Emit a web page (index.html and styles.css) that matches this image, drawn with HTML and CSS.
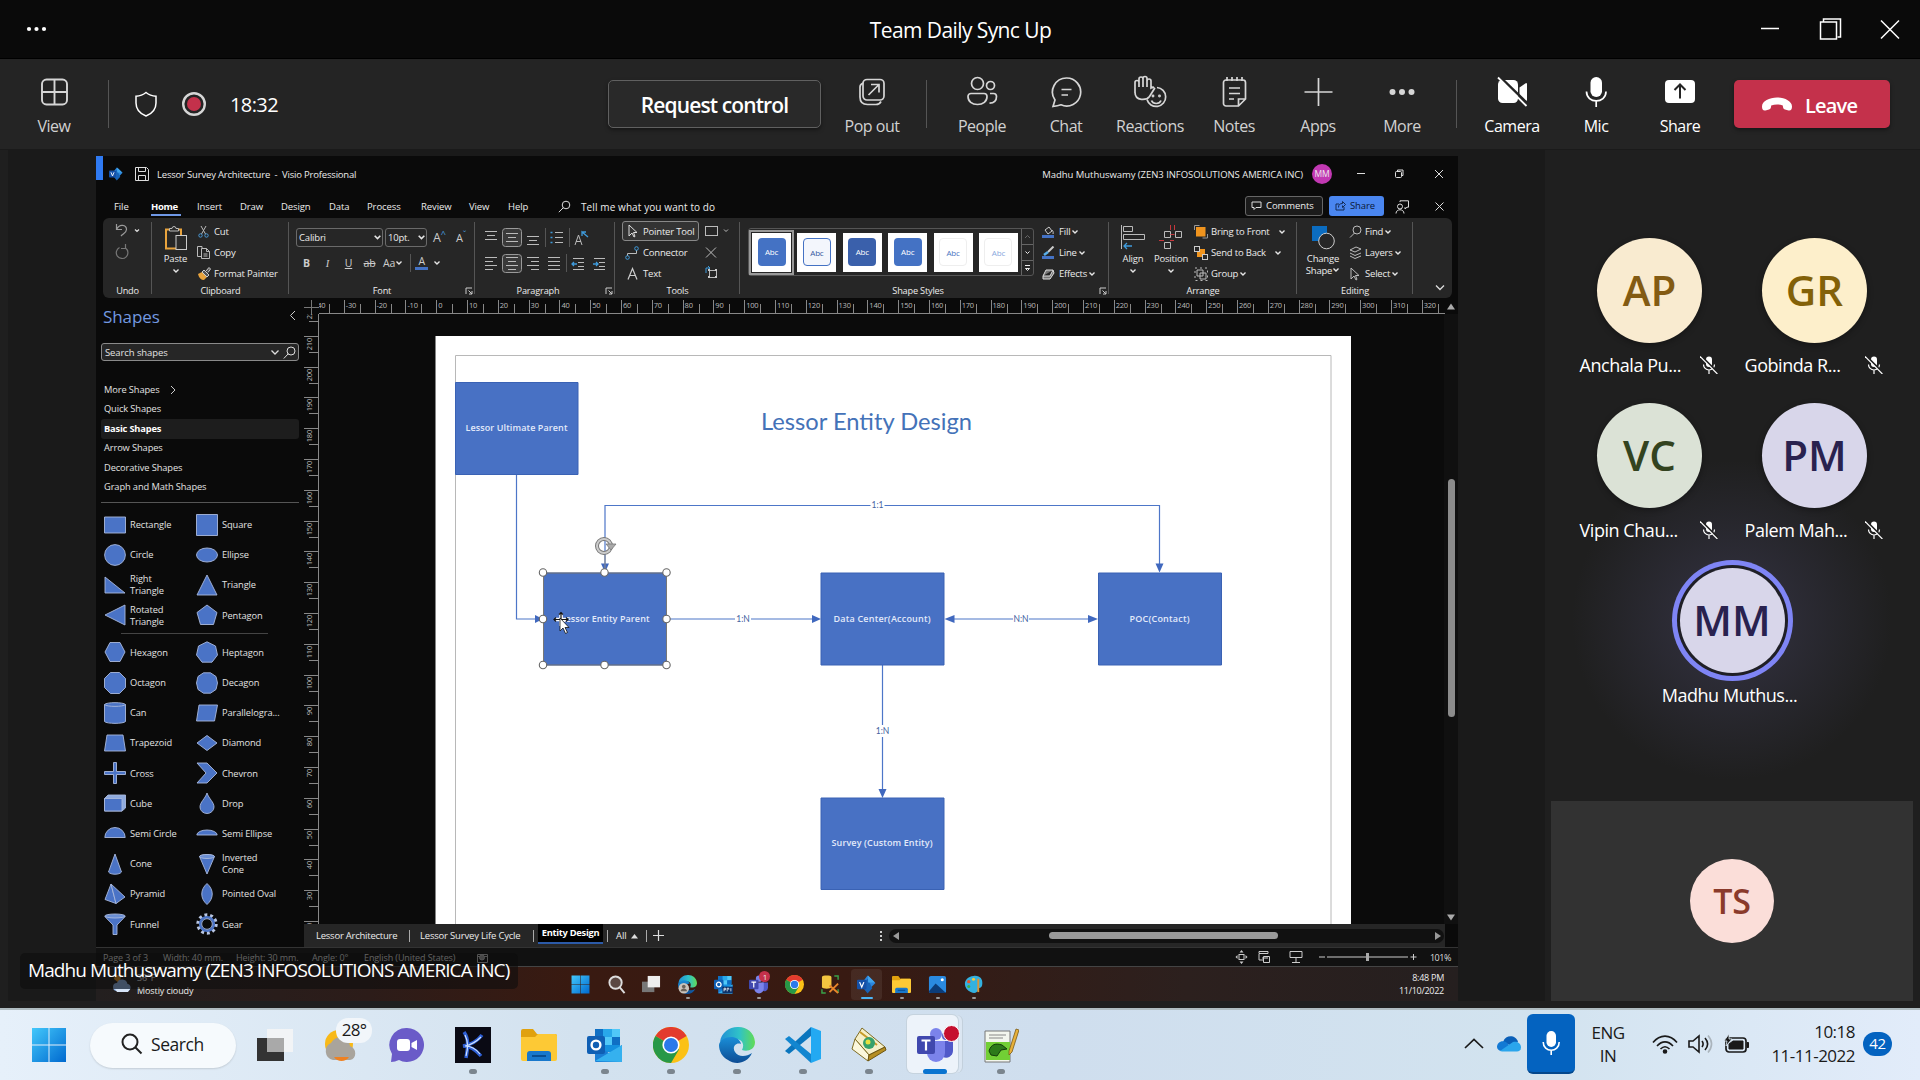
FILE: index.html
```html
<!DOCTYPE html>
<html lang="en">
<head>
<meta charset="utf-8">
<title>Team Daily Sync Up</title>
<link rel="stylesheet" href="styles.css">
</head>
<body>
<svg class="defs" width="0" height="0">
  <defs>
    <symbol id="chev" viewBox="0 0 8 8"><path d="M1.500 2.500 4 5l2.500-2.500" fill="none" stroke="#e6e6e6" stroke-width="1.400"/></symbol>
    <symbol id="mute" viewBox="0 0 18 18"><rect x="6" y="0.5" width="6" height="10.5" rx="3" fill="#fff"/><path d="M3.500 8.500a5.500 5.500 0 0 0 11 0M9 14v4" fill="none" stroke="#fff" stroke-width="1.200"/><path d="M1.200 0 18 17" stroke="#202020" stroke-width="2"/><path d="M0 0.500 17.400 18" stroke="#fff" stroke-width="1.200"/></symbol>
    <symbol id="corner" viewBox="0 0 8 8"><path d="M1 7V1h6M3.500 3.500 7 7M7 4v3H4" fill="none" stroke="#ccc" stroke-width="1"/></symbol>
    <symbol id="chrome" viewBox="0 0 36 36"><circle cx="18" cy="18" r="18" fill="#fbc116"/><path d="M18 18 2.400 9A18 18 0 0 1 33.600 9z" fill="#e33b2e"/><path d="M2.400 9A18 18 0 0 0 18 36l8-13.500-8-4.500z" fill="#279847"/><circle cx="18" cy="18" r="8.600" fill="#fff"/><circle cx="18" cy="18" r="7" fill="#2a79ea"/></symbol>
    <linearGradient id="ed1" x1="0" y1="0" x2="1" y2="0"><stop offset="0" stop-color="#2190d6"/><stop offset=".55" stop-color="#2fc2c8"/><stop offset="1" stop-color="#62dc55"/></linearGradient>
    <linearGradient id="ed2" x1="0" y1="0" x2="0" y2="1"><stop offset="0" stop-color="#1a8fd8"/><stop offset="1" stop-color="#0d4c94"/></linearGradient>
    <symbol id="edge" viewBox="0 0 36 36"><path d="M1 15C3-4 34-6 36 15c0 8-8 10-13 8 3-6 0-11-7-11C9 12 3 14 1 15z" fill="url(#ed1)"/><path d="M0 18c1-9 20-12 22-1-6-2-9 4-6 8 3 5 11 5 17 1C28 37 16 38 9 33 3 30 0 24 0 18z" fill="url(#ed2)"/></symbol>
    <linearGradient id="wn" x1="0" y1="0" x2="1" y2="1"><stop offset="0" stop-color="#43c8fb"/><stop offset="1" stop-color="#0069cf"/></linearGradient>
    <symbol id="win" viewBox="0 0 36 36"><path d="M1 1h16.500v16.500H1zM18.500 1H35v16.500H18.500zM1 18.500h16.500V35H1zM18.500 18.500H35V35H18.500z" fill="url(#wn)"/></symbol>
    <symbol id="folder" viewBox="0 0 36 36"><path d="M0 4a2 2 0 0 1 2-2h10l4 5h18a2 2 0 0 1 2 2v8H0z" fill="#e0a10e"/><path d="M0 10h14l3-3h17a2 2 0 0 1 2 2v23a2 2 0 0 1-2 2H2a2 2 0 0 1-2-2z" fill="#fdc935"/><path d="M6 34V27a3 3 0 0 1 3-3h18a3 3 0 0 1 3 3v7z" fill="#1878cc"/><path d="M11 29h14" stroke="#084e92" stroke-width="2"/></symbol>
    <symbol id="teams" viewBox="0 0 36 36"><circle cx="29" cy="9" r="4" fill="#5b60c8"/><path d="M24 14h12v10a7 7 0 0 1-10 6z" fill="#5059c9"/><circle cx="19" cy="7" r="6" fill="#7b83eb"/><path d="M10 14h18v12a9 9 0 0 1-18 0z" fill="#7b83eb"/><rect x="0" y="9" width="18" height="18" rx="2" fill="#4048ae"/><path d="M4.500 13.500h9M9 13.500v10" stroke="#fff" stroke-width="2.200"/></symbol>
    <symbol id="outlook" viewBox="0 0 36 36"><path d="M8 2h24a1 1 0 0 1 1 1v22H8z" fill="#1490df"/><path d="M16 2h9v8h-9z" fill="#28a8ea"/><path d="M25 2h8v8h-8zM16 10h9v8h-9z" fill="#50c8f8"/><path d="M25 18h8v-8h-8zM8 10h8V2H8z" fill="#0f6fc4"/><path d="M8 17l14 9 13-8v16a1 1 0 0 1-1 1H9a1 1 0 0 1-1-1z" fill="#1a7dd4"/><path d="M8 34 35 18v16a1 1 0 0 1-1 1z" fill="#35b1ef"/><rect x="0" y="9" width="18" height="18" rx="2" fill="#0f5fb4"/><circle cx="9" cy="18" r="4.400" fill="none" stroke="#fff" stroke-width="2.400"/></symbol>
    <symbol id="visio" viewBox="0 0 36 36"><path d="M20 1 35 15 20 30 8 17z" fill="#2b86dd"/><path d="M20 7 8 20l12 15 9-10z" fill="#1763b8"/><path d="M21 1v13h13z" fill="#41a5ee"/><rect x="0" y="9" width="18" height="18" rx="2" fill="#1450a8"/><path d="M5 13.500 9 23l4-9.500" stroke="#fff" stroke-width="2.300" fill="none"/></symbol>
  </defs>
</svg>

<header class="titlebar">
  <svg class="dots" width="22" height="8"><g fill="#fff"><circle cx="3" cy="4" r="2.100"/><circle cx="10.500" cy="4" r="2.100"/><circle cx="18" cy="4" r="2.100"/></g></svg>
  <h1>Team Daily Sync Up</h1>
  <svg class="winctl" width="146" height="28" fill="none" stroke="#fff" stroke-width="1.500"><path d="M7 13.500h18M127 5.500l18 18M145 5.500l-18 18"/><path d="M69.500 7V4h17v18h-3"/><rect x="66.500" y="7" width="16" height="17"/></svg>
</header>

<nav class="toolbar">
  <div class="tool"><svg width="32" height="32" fill="none" stroke="#d6d6d6" stroke-width="1.900"><rect x="4" y="4.500" width="25" height="25" rx="4.500"/><path d="M16.500 4.500v25M4 17h25"/></svg><span>View</span></div>
  <i class="sep"></i>
  <svg class="shield" width="24" height="26" fill="none" stroke="#fff" stroke-width="1.500"><path d="M12 1.500c3 2.500 6 3.500 10 3.700V12c0 6-3.500 10.500-10 13C5.500 22.500 2 18 2 12V5.200C6 5 9 4 12 1.500z"/></svg>
  <svg class="rec" width="26" height="26"><circle cx="13" cy="13" r="10.800" fill="none" stroke="#d6d6d6" stroke-width="2.400"/><circle cx="13" cy="13" r="7" fill="#c4314b"/></svg>
  <span class="clock">18:32</span>
  <button class="request">Request control</button>
  <div class="tool first"><svg width="32" height="32" fill="none" stroke="#d6d6d6" stroke-width="1.700"><rect x="7" y="4.500" width="21" height="20.500" rx="4"/><path d="M7 8c-2 1-3 2-3 4v10c0 5 2.500 7.500 7.500 7.500H20c2.500 0 4-1 5-3M12.500 20 22.500 10M15 9.500h8v8"/></svg><span>Pop out</span></div>
  <i class="sep"></i>
  <div class="tool"><svg width="32" height="32" fill="none" stroke="#d6d6d6" stroke-width="1.700"><circle cx="11.500" cy="8.500" r="6"/><circle cx="24.500" cy="10.500" r="4"/><path d="M5 18.500h13a3 3 0 0 1 3 3c0 5-4 8-9.500 8S2 26.500 2 21.500a3 3 0 0 1 3-3zM24 18.500h3.500a3 3 0 0 1 3 3c0 4-2.500 6.500-7 6.700"/></svg><span>People</span></div>
  <div class="tool"><svg width="32" height="32" fill="none" stroke="#d6d6d6" stroke-width="1.700"><path d="M16.500 3a14 14 0 1 1-5.500 26.800c-2.500.8-5 1.300-8 1.700l2-6.500A14 14 0 0 1 16.500 3zM11.500 14.500h10M11.500 20h6.500"/></svg><span>Chat</span></div>
  <div class="tool"><svg width="34" height="34" fill="none" stroke="#d6d6d6" stroke-width="1.700"><path d="M2 18V7.500a2 2 0 0 1 4 0V12M6 12V4a2 2 0 0 1 4 0v8M10 12V3.500a2 2 0 0 1 4 0V12M14 6a2 2 0 0 1 4 0v7l2-1 1.500 1.500-5 8C14 25 2 27 2 17"/><path d="M24 12.500a9.500 9.500 0 1 1-10 12"/><path d="M18.500 25.500c1.500 4 8 4 9.500 0"/><circle cx="20" cy="21" r=".6"/><circle cx="26.500" cy="21" r=".6"/></svg><span>Reactions</span></div>
  <div class="tool"><svg width="32" height="32" fill="none" stroke="#d6d6d6" stroke-width="1.700"><path d="M8 5h17a2.500 2.500 0 0 1 2.500 2.500V24l-7 7H8a2.500 2.500 0 0 1-2.500-2.500v-21A2.500 2.500 0 0 1 8 5zM20.500 31v-7h7M9 2v4M14 2v4M19 2v4M24 2v4M11 13h11M11 18.500h11M11 24h5"/></svg><span>Notes</span></div>
  <div class="tool"><svg width="32" height="32" stroke="#d6d6d6" stroke-width="1.700"><path d="M16.500 3v28M2.500 17h28"/></svg><span>Apps</span></div>
  <div class="tool"><svg width="32" height="32" fill="#d6d6d6"><circle cx="6.500" cy="17" r="3"/><circle cx="16" cy="17" r="3"/><circle cx="25.500" cy="17" r="3"/></svg><span>More</span></div>
  <i class="sep s3"></i>
  <div class="tool on"><svg width="32" height="32"><rect x="2" y="5" width="20" height="23" rx="4.500" fill="#fff"/><path d="M23.500 12.500 30 8a1 1 0 0 1 1 1v16a1 1 0 0 1-1 1l-6.500-5z" fill="#fff"/><path d="M3.500 1.500 32 29" stroke="#242424" stroke-width="2.500"/><path d="M2 2.500 30.500 31" stroke="#fff" stroke-width="1.800"/></svg><span>Camera</span></div>
  <div class="tool on"><svg width="32" height="32"><rect x="10.500" y="2" width="11.500" height="20" rx="5.700" fill="#fff"/><path d="M6.500 16.500c0 12.500 19.500 12.500 19.500 0M16.200 26v6" fill="none" stroke="#fff" stroke-width="1.700"/></svg><span>Mic</span></div>
  <div class="tool on"><svg width="32" height="32"><rect x="1" y="5" width="30" height="23" rx="4" fill="#fff"/><path d="M16 23.500V10M10.500 15l5.500-5.500 5.500 5.500" fill="none" stroke="#242424" stroke-width="2"/></svg><span>Share</span></div>
  <button class="leave"><svg width="30" height="14"><path d="M15 .5c7.500 0 15 3.500 15 9 0 3-1.200 4.500-3.500 4l-3.500-1c-1.700-.5-2-1.500-2.200-4-3.500-1.500-8-1.500-11.600 0-.2 2.500-.5 3.500-2.200 4l-3.500 1C1.200 14 0 12.500 0 9.500 0 4 7.500.5 15 .5z" fill="#fff"/></svg>Leave</button>
</nav>

<main class="stage">
  <section class="share">
    <div class="visio">
      <div class="vtitle">
        <i class="marker"></i>
        <svg class="vlogo" width="14" height="14"><use href="#visio"/></svg>
        <svg class="save" width="14" height="14" fill="none" stroke="#ddd"><path d="M1 .5h10.500l2 2v11H.5V.5zM3.500.5v4h7v-4M3.500 13.500v-5h7v5"/></svg>
        <span class="doc">Lessor Survey Architecture&nbsp; -&nbsp; Visio Professional</span>
        <span class="user">Madhu Muthuswamy (ZEN3 INFOSOLUTIONS AMERICA INC)</span>
        <b class="ava">MM</b>
        <svg class="vctl" width="90" height="12" fill="none" stroke="#ddd"><path d="M1 5.500h8M79 2l8 8M87 2l-8 8M41.500 3.500V2h5.500v5.500h-1.500"/><rect x="39.500" y="3.500" width="6" height="6" rx="1"/></svg>
      </div>
      <div class="menus">
        <span class="m1">File</span><span class="m2 cur">Home</span><span class="m3">Insert</span><span class="m4">Draw</span><span class="m5">Design</span><span class="m6">Data</span><span class="m7">Process</span><span class="m8">Review</span><span class="m9">View</span><span class="m10">Help</span>
        <svg width="13" height="13" fill="none" stroke="#ddd"><circle cx="8" cy="5" r="3.800"/><path d="M5.300 7.700.8 12.200"/></svg>
        <span class="tell">Tell me what you want to do</span>
        <button class="comments"><svg width="11" height="10" fill="none" stroke="#ddd"><path d="M1 1h9v5.500H5L3 8.500v-2H1z"/></svg>Comments</button>
        <button class="shareb"><svg width="11" height="11" fill="none" stroke="#132a55"><path d="M4 4H1v6h8V7M3.500 7.500c0-3 1.500-4 4-4V1.500l3 3-3 3V5.500"/></svg>Share</button>
        <svg class="fb" width="15" height="14" fill="none" stroke="#ddd"><path d="M5 2V.8h8.500v6.400H12L10 9V7.200M1 13.500c0-5 8-5 8 0"/><circle cx="5" cy="6.500" r="2.500"/></svg>
        <svg class="x2" width="9" height="9" stroke="#ddd"><path d="M.5.5l8 8M8.500.5l-8 8"/></svg>
      </div>

      <div class="ribbon">
        <div class="grp g-undo"><div class="body"><svg width="48" height="63" fill="none" stroke="#9a9a9a" stroke-width="1.200"><path d="M13.500 3v5.500H19M13.500 8.500c3-6.500 10-4.500 10 0 0 3-3 4-5.500 6.500"/><path d="M22.500 27a5.800 5.800 0 1 1-6-.5M22.500 23v4.500H18" stroke="#777"/><path d="m32 8.500 2 2 2-2" stroke="#ddd"/></svg></div><em>Undo</em></div>
        <div class="grp g-clip"><div class="body">
          <div class="big"><svg width="24" height="26" fill="none"><rect x="2" y="4.500" width="15" height="19" stroke="#e8a33d" stroke-width="2"/><path d="M5.500 6V3.500H8a2 2 0 0 1 4 0h2.500V6z" fill="#2a2a2a" stroke="#bbb"/><rect x="12" y="10.500" width="10.500" height="14" fill="#2a2a2a" stroke="#ccc"/></svg><span>Paste</span><svg width="8" height="8"><use href="#chev"/></svg></div>
          <div class="rows">
            <div><svg width="14" height="13" fill="none" stroke="#bbb"><path d="M4 1l4.500 8M9 1 4.500 9"/><circle cx="3.500" cy="10.500" r="1.700" stroke="#4a9ad8"/><circle cx="9.500" cy="10.500" r="1.700" stroke="#4a9ad8"/></svg>Cut</div>
            <div><svg width="14" height="13" fill="none" stroke="#bbb"><path d="M4.500 10.500H.5v-10H5v2M4.500 2.500h5l3 3v7h-8zM9.500 2.500v3h3M6.500 8h4M6.500 10h4"/></svg>Copy</div>
            <div><svg width="14" height="13"><path d="M1 7l4-2 5 5-3 3c-3 0-5-2-6-6z" fill="#e8a33d"/><path d="M5 5l2-2 5 5-2 2zM9 4l3-3.500 1.500 1.500L11 5.500" fill="#555" stroke="#ccc"/></svg>Format Painter</div>
          </div></div><em>Clipboard</em></div>
        <div class="grp g-font"><div class="body two">
          <div class="line"><span class="combo c1">Calibri<svg width="9" height="9"><use href="#chev"/></svg></span><span class="combo c2">10pt.<svg width="9" height="9"><use href="#chev"/></svg></span><span class="aa">A<sup>^</sup></span><span class="aa sm">A<sup>ˇ</sup></span></div>
          <div class="line fmt"><b>B</b><i>I</i><u>U</u><s>ab</s><span>Aa</span><svg width="8" height="8"><use href="#chev"/></svg><i class="vs"></i><span class="acol">A</span><svg width="8" height="8"><use href="#chev"/></svg></div>
        </div><em>Font</em><svg class="dl" width="8" height="8"><use href="#corner"/></svg></div>
        <div class="grp g-para"><div class="body">
          <svg width="139" height="63" fill="none" stroke="#bbb"><rect x="27.500" y="7.500" width="19" height="18" rx="3" fill="#3a3a3a" stroke="#999"/><rect x="27.500" y="33.500" width="19" height="18" rx="3" fill="#3a3a3a" stroke="#999"/><path d="M10 10.500h12M12 14.500h8M10 18.500h12M31 12.500h12M33 16.500h8M31 20.500h12M52 15.500h12M54 19.500h8M52 23.500h12M10 36.500h12M10 40.500h8M10 44.500h12M10 48.500h8M31 36.500h12M33 40.500h8M31 44.500h12M33 48.500h8M52 36.500h12M56 40.500h8M52 44.500h12M56 48.500h8M73 36.500h12M73 40.500h12M73 44.500h12M73 48.500h12M80 11.500h8M80 16.500h8M80 21.500h8M98 37.500h11M103 41.500h6M103 45.500h6M98 48.500h11M119 37.500h11M124 41.500h6M124 45.500h6M119 48.500h11"/><path d="M70.500 7v19M94.500 7v19M91.500 33v18" stroke="#555"/><path d="M75.500 11.500h2M75.500 16.500h2M75.500 21.500h2M102 43h-5m2-2-2 2 2 2M118 43h5m-2-2 2 2-2 2M107 15V11l6 5M107 11h4" stroke="#3f9bdb" stroke-width="1.300"/><path d="M100 24l3.500-10L107 24M101 20.500h5"/></svg>
        </div><em>Paragraph</em><svg class="dl" width="8" height="8"><use href="#corner"/></svg></div>
        <div class="grp g-tools"><div class="body">
          <div class="rows">
            <div class="boxed"><svg width="16" height="14" fill="none" stroke="#ddd"><path d="M5 1v11l3-3 2 4 1-.6L9.500 8.500H13z"/></svg>Pointer Tool</div>
            <div><svg width="16" height="14" fill="none" stroke="#bbb"><path d="M3.500 10V7.500h9V4"/><circle cx="3.500" cy="11.500" r="1.800" stroke="#3f9bdb"/><circle cx="12.500" cy="2.500" r="1.800" stroke="#3f9bdb"/></svg>Connector</div>
            <div><svg width="16" height="14" fill="none" stroke="#ccc" stroke-width="1.200"><path d="M4 12.500 8.500 1.500 13 12.500M5.500 8.500h6"/></svg>Text</div>
          </div>
          <svg class="tb" width="34" height="63" fill="none" stroke="#bbb"><rect x="2.500" y="5.500" width="12" height="9"/><path d="m21 8.500 2 2 2-2M3 26.500l10 10M13 26.500l-10 10M6.500 49.500h7v7h-7z"/><path d="M3 52v-5h4M5 45l2 2-2 2" stroke="#3f9bdb"/><path d="M5 48h2v2H5zM12 48h2v2h-2zM5 55h2v2H5zM12 55h2v2h-2z" fill="#ccc" stroke="none"/></svg>
        </div><em>Tools</em></div>
        <div class="grp g-style"><div class="body">
          <div class="gallery"><span class="t sel"><b class="f1">Abc</b></span><span class="t"><b class="f2">Abc</b></span><span class="t"><b class="f3">Abc</b></span><span class="t"><b class="f1">Abc</b></span><span class="t"><b class="f5">Abc</b></span><span class="t"><b class="f6">Abc</b></span>
            <svg width="12" height="46" fill="none" stroke="#666"><path d="M.5 0v46M0 15.500h12M0 31.500h12M4 9l2.500-2.500L9 9"/><path d="M4.500 22.500l2 2 2-2M4 36.500h5M4.500 39.500l2 2 2-2z" stroke="#eee"/></svg></div>
          <div class="rows">
            <div><svg width="13" height="14"><rect y="10" width="12" height="3" fill="#4472c4"/><path d="M3 5l4-3 3 4-4 3zM10 5c1 1 1.500 2 1 4" fill="none" stroke="#ccc"/></svg>Fill<svg width="8" height="8"><use href="#chev"/></svg></div>
            <div><svg width="13" height="14"><rect y="10" width="12" height="3" fill="#4472c4"/><path d="M11.500.5 6 6" stroke="#ccc" stroke-width="2"/><path d="M6 6 2 9" stroke="#5ab0ea" stroke-width="2.500"/></svg>Line<svg width="8" height="8"><use href="#chev"/></svg></div>
            <div><svg width="13" height="14" fill="#777" stroke="#ddd"><path d="M1 9 4 3h7l-3 6zM1 9v3h7l4-6-1-3"/></svg>Effects<svg width="8" height="8"><use href="#chev"/></svg></div>
          </div></div><em>Shape Styles</em><svg class="dl" width="8" height="8"><use href="#corner"/></svg></div>
        <div class="grp g-arr"><div class="body">
          <div class="big"><svg width="24" height="26" fill="none" stroke="#bbb"><path d="M.5 0v24M2.500 1.500h9v5h-9zM2.500 9.500h21v5h-21z"/><path d="M11 21H3m3-3-3 3 3 3" stroke="#3f9bdb" stroke-width="1.300"/></svg><span>Align</span><svg width="8" height="8"><use href="#chev"/></svg></div>
          <div class="big"><svg width="24" height="26" fill="none" stroke="#bbb"><path d="M5.500 6.500h6v6h-6zM16.500 6.500h6v6h-6zM5.500 17.500h6v6h-6z"/><path d="M11.500 0v5M15.500 0v5M11.500 9.500h4M0 15.500h5M11 15.500h4" stroke="#c7373c"/></svg><span>Position</span><svg width="8" height="8"><use href="#chev"/></svg></div>
          <div class="rows">
            <div><svg width="14" height="14" fill="none" stroke="#999"><path d="M.5 5V.5h5M13.500 9v4h-5"/><rect x="2.500" y="2.500" width="8.500" height="8.500" fill="#f0941e" stroke="#f0941e"/></svg>Bring to Front<svg class="far" width="8" height="8"><use href="#chev"/></svg></div>
            <div><svg width="14" height="14" fill="none" stroke="#ccc"><rect x="3" y="3" width="8" height="8" fill="#f0941e" stroke="none"/><rect x=".5" y=".5" width="5" height="5" fill="#262626"/><rect x="8.500" y="8.500" width="5" height="5" fill="#262626"/></svg>Send to Back<svg class="far" width="8" height="8"><use href="#chev"/></svg></div>
            <div><svg width="14" height="14" fill="none" stroke="#bbb"><path d="M3 3h6v6H3zM6 6h6v6H6z"/><path d="M1 1h12.500v12.500H1z" stroke-dasharray="2 3"/></svg>Group<svg width="8" height="8"><use href="#chev"/></svg></div>
          </div></div><em>Arrange</em></div>
        <div class="grp g-edit"><div class="body">
          <div class="big lift"><svg width="24" height="26"><rect x="1" y="1" width="15" height="15" fill="#0b6cc0"/><circle cx="15.500" cy="16" r="7.800" fill="#262626" stroke="#ccc"/></svg><span>Change<br>Shape<svg width="8" height="8"><use href="#chev"/></svg></span></div>
          <div class="rows">
            <div><svg width="13" height="14" fill="none" stroke="#bbb"><circle cx="8" cy="5" r="4"/><path d="M5.500 8 1 12.500"/></svg>Find<svg width="8" height="8"><use href="#chev"/></svg></div>
            <div><svg width="13" height="14" fill="none" stroke="#bbb"><path d="M1 4l6-3 5 2-6 3zM1 7l5 2.500L12 7M1 10l5 2.500L12 10"/></svg>Layers<svg width="8" height="8"><use href="#chev"/></svg></div>
            <div><svg width="13" height="14" fill="none" stroke="#bbb"><path d="M2 1v11l3-3 2 4 1-.6L6.500 8.500H10z"/></svg>Select<svg width="8" height="8"><use href="#chev"/></svg></div>
          </div></div><em>Editing</em></div>
        <svg class="collapse" width="10" height="8" fill="none" stroke="#ddd" stroke-width="1.300"><path d="m1 1.500 4 4 4-4"/></svg>
      </div>

      <div class="work">
        <aside class="shapes">
          <h2>Shapes<svg width="7" height="11" fill="none" stroke="#ccc"><path d="M6 1 1.500 5.500 6 10"/></svg></h2>
          <div class="search"><span>Search shapes</span><svg width="10" height="10" fill="none" stroke="#ddd" stroke-width="1.300"><path d="m1.500 3.500 3.500 3.500 3.500-3.500"/></svg><svg width="13" height="13" fill="none" stroke="#ddd"><circle cx="8" cy="5" r="4"/><path d="M5.300 7.700.8 12.500"/></svg></div>
          <ul class="cats"><li>More Shapes<svg width="6" height="10" fill="none" stroke="#ccc"><path d="M1 1l4 4-4 4"/></svg></li><li>Quick Shapes</li><li class="cur">Basic Shapes</li><li>Arrow Shapes</li><li>Decorative Shapes</li><li>Graph and Math Shapes</li></ul>
          <div class="pal">
            <div><svg viewBox="0 0 22 22"><path d="M.5 3h21v16H.5z"/></svg>Rectangle</div><div><svg viewBox="0 0 22 22"><path d="M.5.500h21v21H.5z"/></svg>Square</div>
            <div><svg viewBox="0 0 22 22"><circle cx="11" cy="11" r="10.400"/></svg>Circle</div><div><svg viewBox="0 0 22 22"><ellipse cx="11" cy="11" rx="10.500" ry="7"/></svg>Ellipse</div>
            <div><svg viewBox="0 0 22 22"><path d="M1 3v16h20z"/></svg><span>Right<br>Triangle</span></div><div><svg viewBox="0 0 22 22"><path d="M11 1 1 21h20z"/></svg>Triangle</div>
            <div><svg viewBox="0 0 22 22"><path d="M21 1v20L1 11z"/></svg><span>Rotated<br>Triangle</span></div><div><svg viewBox="0 0 22 22"><path d="M11 1 21 8.500 17.500 20.500h-13L1 8.500z"/></svg>Pentagon</div>
          </div>
          <hr>
          <div class="pal">
            <div><svg viewBox="0 0 22 22"><path d="M6 1.500h10l5 9.500-5 9.500H6L1 11z"/></svg>Hexagon</div><div><svg viewBox="0 0 22 22"><path d="M11 .8 19.500 5l2 9-5.500 7.200H6L.5 14l2-9z"/></svg>Heptagon</div>
            <div><svg viewBox="0 0 22 22"><path d="M6.500.500h9l6 6v9l-6 6h-9l-6-6v-9z"/></svg>Octagon</div><div><svg viewBox="0 0 22 22"><path d="M7.500.800h7L20 4.500l1.500 6.500-1.500 6.500-5.500 3.700h-7L2 17.500.5 11 2 4.500z"/></svg>Decagon</div>
            <div><svg viewBox="0 0 22 22"><path d="M.5 2.500v17c2 2.500 19 2.500 21 0v-17c-2-2.500-19-2.500-21 0 2 2.500 19 2.500 21 0"/></svg>Can</div><div><svg viewBox="0 0 22 22"><path d="M3 3h18.500l-3 16H.5z"/></svg>Parallelogra...</div>
            <div><svg viewBox="0 0 22 22"><path d="M3 3h16l2.500 16H.5z"/></svg>Trapezoid</div><div><svg viewBox="0 0 22 22"><path d="M11 3.500 21 11l-10 7.500L1 11z"/></svg>Diamond</div>
            <div><svg viewBox="0 0 22 22"><path d="M9.500.500h3v9h9v3h-9v9h-3v-9h-9v-3h9z"/></svg>Cross</div><div><svg viewBox="0 0 22 22"><path d="M1 1h10l10 10-10 10H1l9-10z"/></svg>Chevron</div>
            <div><svg viewBox="0 0 22 22"><path d="M.5 6.500 4 3h17.500v13L18 19H.5z" fill="#8fabdf"/><path d="M.5 6.500H18V19H.5z"/></svg>Cube</div><div><svg viewBox="0 0 22 22"><path d="M11 1c2 6 7 9 7 14a7 6.500 0 0 1-14 0c0-5 5-8 7-14z"/></svg>Drop</div>
            <div><svg viewBox="0 0 22 22"><path d="M.8 15.500a10.200 10 0 0 1 20.400 0z"/></svg>Semi Circle</div><div><svg viewBox="0 0 22 22"><path d="M.8 13a10.200 5 0 0 1 20.400 0z"/></svg>Semi Ellipse</div>
            <div><svg viewBox="0 0 22 22"><path d="M11 1 17.500 19c-2 3-11 3-13 0z"/></svg>Cone</div><div><svg viewBox="0 0 22 22"><path d="M3.500 3.500C5 1 17 1 18.500 3.500L11 21z"/><ellipse cx="11" cy="3.500" rx="7.500" ry="2" fill="#6b8fd4"/></svg><span>Inverted<br>Cone</span></div>
            <div><svg viewBox="0 0 22 22"><path d="M7 1 1 16.500l11 4z"/><path d="M7 1l14 13-9 6.500z"/></svg>Pyramid</div><div><svg viewBox="0 0 22 22"><path d="M11 .5c7 6 7 15 0 21-7-6-7-15 0-21z"/></svg>Pointed Oval</div>
            <div><svg viewBox="0 0 22 22"><path d="M.8 3.500 9 12v9.500h4V12l8.200-8.500z"/><ellipse cx="11" cy="3" rx="10.200" ry="2" fill="#6b8fd4"/></svg>Funnel</div><div><svg viewBox="0 0 22 22"><circle cx="11" cy="11" r="8.800" fill="none" stroke-width="3.800" stroke="#b9c6e2" stroke-dasharray="2.800 2.730"/><circle cx="11" cy="11" r="6.800" fill="#0a0a0a" stroke="#4a73c6" stroke-width="2.600"/><circle cx="11" cy="11" r="5.300" fill="none"/></svg>Gear</div>
          </div>
        </aside>

        <div class="editor">
          <div class="hruler"><i class="cross"></i><div class="ticks"><span>-40</span><span>-30</span><span>-20</span><span>-10</span><span>0</span><span>10</span><span>20</span><span>30</span><span>40</span><span>50</span><span>60</span><span>70</span><span>80</span><span>90</span><span>100</span><span>110</span><span>120</span><span>130</span><span>140</span><span>150</span><span>160</span><span>170</span><span>180</span><span>190</span><span>200</span><span>210</span><span>220</span><span>230</span><span>240</span><span>250</span><span>260</span><span>270</span><span>280</span><span>290</span><span>300</span><span>310</span><span>320</span></div></div>
          <div class="mid">
            <div class="vruler"><span><b>220</b></span><span><b>210</b></span><span><b>200</b></span><span><b>190</b></span><span><b>180</b></span><span><b>170</b></span><span><b>160</b></span><span><b>150</b></span><span><b>140</b></span><span><b>130</b></span><span><b>120</b></span><span><b>110</b></span><span><b>100</b></span><span><b>90</b></span><span><b>80</b></span><span><b>70</b></span><span><b>60</b></span><span><b>50</b></span><span><b>40</b></span><span><b>30</b></span><span><b>20</b></span></div>
            <svg class="canvas" viewBox="319 314 1125 610" width="1125" height="610">
              <path d="M435.500 336h915.500v600H435.500z" fill="#fff"/>
              <path d="M455.500 930V355.500h875.500V930" fill="none" stroke="#b8b8b8"/>
              <text class="dt" x="866.500" y="430" textLength="211" lengthAdjust="spacingAndGlyphs">Lessor Entity Design</text>
              <g fill="none" stroke="#4d76c8" stroke-width="1.200">
                <path d="M516.500 474v145H537M605 568V505.500h554.500V568M667 619h148M950 619h142M882.500 665v127"/>
              </g>
              <g fill="#4068be"><path d="M543 619l-8-4v8zM605 572.500l-4-9h8zM1159.500 572.500l-4-9h8zM821 619l-9-4v8zM944.500 619l10-4v8zM1098 619l-10-4v8zM882.500 798l-4-9h8z"/></g>
              <g fill="#fff"><path d="M870.500 500h14v11h-14zM735 614h16v11h-16zM1013 614h16v11h-16zM875 725h15v12h-15z"/></g>
              <g class="cl"><text x="877.500" y="508">1:1</text><text x="743" y="622">1:N</text><text x="1021" y="622">N:N</text><text x="882.500" y="734">1:N</text></g>
              <path d="M455.500 382.500H578v92H455.500zM543.500 573h123v92h-123zM821 573h123v92H821zM1098.500 573h123v92h-123zM821 798h123v91.500H821z" fill="#4871c4" stroke="#3a62b4"/>
              <g class="bl"><text x="516.500" y="431" textLength="102">Lessor Ultimate Parent</text><text x="605" y="622" textLength="89">Lessor Entity Parent</text><text x="882" y="622" textLength="97">Data Center(Account)</text><text x="1159.500" y="622" textLength="60">POC(Contact)</text><text x="882" y="846" textLength="101">Survey (Custom Entity)</text></g>
              <path d="M543.500 573h123v92h-123z" fill="none" stroke="#777"/>
              <path d="M605 555v15" stroke="#8a8a8a"/>
              <g fill="#fff" stroke="#666" stroke-width="1.100"><circle cx="543" cy="572.500" r="3.700"/><circle cx="604.500" cy="572.500" r="3.700"/><circle cx="666.500" cy="572.500" r="3.700"/><circle cx="543" cy="619" r="3.700"/><circle cx="666.500" cy="619" r="3.700"/><circle cx="543" cy="665" r="3.700"/><circle cx="604.500" cy="665" r="3.700"/><circle cx="666.500" cy="665" r="3.700"/></g>
              <circle cx="604" cy="546" r="7" fill="none" stroke="#777" stroke-width="4"/><circle cx="604" cy="546" r="7" fill="none" stroke="#ccc" stroke-width="2"/><path d="M606 544h10l-5 6z" fill="#aaa" stroke="#777" stroke-width=".8"/>
              <path d="M555 619.500h12M561 613v13" stroke="#fff" stroke-width="3.500"/><path d="M554 619.500h14M561 612.500v14M556 617.500l-2 2 2 2M559 614.500l2-2 2 2M566 617.500l2 2-2 2" fill="none" stroke="#111" stroke-width="1.200"/>
              <path d="M560 618v13l3-3 2.500 5.500 2-1-2.500-5h4z" fill="#fff" stroke="#111" stroke-width=".8"/>
            </svg>
            <div class="vscroll"><svg class="up" width="8" height="7"><path d="M0 6.500h8L4 .5z" fill="#aaa"/></svg><i></i><svg width="8" height="7"><path d="M0 .5h8L4 6.500z" fill="#aaa"/></svg></div>
          </div>
          <div class="tabs">
            <span class="p1">Lessor Architecture</span><i></i><span class="p2">Lessor Survey Life Cycle</span><i></i><span class="p3">Entity Design</span><i></i><span class="p4">All<svg width="7" height="6"><path d="M0 5.500h7L3.500 1z" fill="#ddd"/></svg></span><i></i>
            <svg class="plus" width="11" height="11" stroke="#ddd" stroke-width="1.200"><path d="M5.500 0v11M0 5.500h11"/></svg>
            <svg class="grip" width="3" height="10" fill="#ccc"><path d="M0 0h2v2H0zM0 4h2v2H0zM0 8h2v2H0z"/></svg>
            <div class="hs"><svg width="6" height="8"><path d="M6 0v8L0 4z" fill="#999"/></svg><i></i><svg width="6" height="8"><path d="M0 0v8l6-4z" fill="#999"/></svg></div>
          </div>
        </div>
      </div>

      <div class="status"><span class="q1">Page 3 of 3</span><span class="q2">Width: 40 mm.</span><span class="q3">Height: 30 mm.</span><span class="q4">Angle: 0°</span><span class="q5">English (United States)</span>
        <svg width="12" height="11" fill="none" stroke="#bbb"><path d="M.5 2.500h10v8H.5zM.5 4.500h10"/><circle cx="5" cy="5.500" r="2.500" fill="#999"/></svg>
        <svg class="qr" width="188" height="14" fill="none" stroke="#ccc"><rect x="4" y="4.500" width="5" height="5"/><path d="M6.500 0l2 2.500h-4zM6.500 14l2-2.500h-4zM.5 7l2-2v4zM12.500 7l-2-2v4z" fill="#ccc" stroke="none"/><path d="M24 1.500h9v2h-9zM24 4v6h4M28.500 6.500h6v6h-6zM27 8h6M55 1.500h12v6H55zM61 8v4.500M57 12.500h8M84 7h6M92 7h81M175.500 7h6M178.500 4v6"/><rect x="131" y="3" width="3" height="8" fill="#aaa" stroke="none"/></svg><span class="pct">101%</span></div>

      <div class="vtask">
        <svg class="cloud" width="22" height="18"><path d="M3 4a5 5 0 0 1 8-3c-2 1-1 4-3 7z" fill="#d98b1f"/><path d="M6 16a4 4 0 0 1 0-8 5.500 5.500 0 0 1 10.500 1A3.600 3.600 0 0 1 17 16z" fill="#8fb2e6"/><path d="M4 14h15l-2 3H6z" fill="#d7e4f7"/></svg>
        <div class="wt">36°F<br>Mostly cloudy</div>
        <div class="vicons">
          <svg><use href="#win"/></svg>
          <svg viewBox="0 0 20 20" fill="none" stroke="#ddd" stroke-width="2"><circle cx="9" cy="8" r="6.500" fill="#5b4843"/><path d="m13.500 13 5 6"/></svg>
          <svg viewBox="0 0 20 20"><path d="M0 7h13v11H0z" fill="#777"/><path d="M6 1h13v12H6z" fill="#eee"/></svg>
          <span class="dot"><svg viewBox="0 0 36 36"><use href="#edge"/><circle cx="11" cy="25" r="10" fill="#c9c3bb"/><circle cx="11" cy="22" r="3.500" fill="#6b6259"/><path d="M5 31c0-7 12-7 12 0z" fill="#6b6259"/></svg></span>
          <svg viewBox="0 0 36 36"><use href="#outlook"/><rect x="16" y="22" width="20" height="12" fill="#0a2e66"/><path d="M19 31v-6h3v3h-3M25 31v-6h3v3M32 31v-6" stroke="#fff" stroke-width="1.500" fill="none"/></svg>
          <span class="dot tm"><svg><use href="#teams"/></svg><b>1</b></span>
          <svg><use href="#chrome"/></svg>
          <svg viewBox="0 0 20 20"><path d="M1 2c0-2 10-2 10 0v11c0 2-10 2-10 0z" fill="#f3c540"/><path d="M1 15v4h4M14 1h4v4M18 15v4" fill="none" stroke="#39a24a" stroke-width="1.500"/><path d="m9 11 9 8M18 9l-9 9" stroke="#e8842a" stroke-width="2"/></svg>
          <span class="dot act"><svg><use href="#visio"/></svg></span>
          <span class="dot"><svg><use href="#folder"/></svg></span>
          <span class="dot"><svg viewBox="0 0 20 20"><rect x="1" y="1" width="18" height="18" rx="2" fill="#2a8ae0"/><path d="m1 17 7-8 11 10H3a2 2 0 0 1-2-2z" fill="#0c3c78"/><circle cx="15" cy="5" r="1.600" fill="#fff"/></svg></span>
          <span class="dot"><svg viewBox="0 0 20 20"><path d="M10 1c9-1 10 6 9 10-1 3-3 2-4 4-1 4-4 5-8 3C-2 14-1 2 10 1z" fill="#33b1e0"/><circle cx="5" cy="7" r="1.800" fill="#e8542a"/><circle cx="10" cy="4.500" r="1.600" fill="#f5c73c"/><circle cx="5" cy="12" r="1.600" fill="#3fae49"/><path d="M15 4v14" stroke="#d9953c" stroke-width="2"/></svg></span>
        </div>
        <div class="vt">8:48 PM<br>11/10/2022</div>
      </div>
    </div>
    <div class="caption">Madhu Muthuswamy (ZEN3 INFOSOLUTIONS AMERICA INC)</div>
  </section>

  <aside class="people">
    <div class="glow"></div>
    <div class="pgrid">
      <div class="p"><b class="ap">AP</b><div><span>Anchala Pu...</span><svg width="18" height="18"><use href="#mute"/></svg></div></div>
      <div class="p"><b class="gr">GR</b><div><span>Gobinda R...</span><svg width="18" height="18"><use href="#mute"/></svg></div></div>
      <div class="p"><b class="vc">VC</b><div><span>Vipin Chau...</span><svg width="18" height="18"><use href="#mute"/></svg></div></div>
      <div class="p"><b class="pm">PM</b><div><span>Palem Mah...</span><svg width="18" height="18"><use href="#mute"/></svg></div></div>
    </div>
    <div class="p solo"><b class="pm ring">MM</b><span>Madhu Muthus...</span></div>
    <div class="self"><b>TS</b></div>
  </aside>
</main>

<footer class="taskbar">
  <svg class="start" width="36" height="36"><use href="#win"/></svg>
  <div class="find"><svg width="22" height="22" fill="none" stroke="#222" stroke-width="2"><circle cx="9" cy="9" r="7.500"/><path d="m14.500 14.500 6 6"/></svg>Search</div>
  <div class="apps">
    <span><svg viewBox="0 0 36 36"><path d="M0 11h27v23H0z" fill="#333"/><path d="M10 2h26v23H10z" fill="#f6f6f6" opacity=".85"/><path d="M10 11h17v14H10z" fill="#a9a9a9"/></svg></span>
    <span class="wx"><svg viewBox="0 0 36 36"><circle cx="16" cy="17" r="14" fill="#f8b918"/><path d="M10 33a9 9 0 0 1-2-17 10 10 0 0 1 19 3c7 2 7 13 0 14z" fill="#a9a49c"/><path d="M11 30h15a9 9 0 0 1-15 0z" fill="#ee8122"/></svg><b>28°</b></span>
    <span><svg viewBox="0 0 36 36"><path d="M18 1a17 17 0 1 1-8 32c-3 1-5 2-8 2l1-8A17 17 0 0 1 18 1z" fill="#6a5bc8"/><rect x="8" y="12" width="13" height="12" rx="3" fill="#fff"/><path d="m22.500 16 5.500-3v10l-5.500-3z" fill="#fff"/></svg></span>
    <span class="dot"><svg viewBox="0 0 36 36"><path d="M0 0h36v36H0z" fill="#0a0a14"/><path d="M9 5c5 7 4 15 2 26M27 8C21 16 14 18 8 19c8 0 13 4 18 10" fill="none" stroke="#2e5fd6" stroke-width="3.500"/><path d="M10 8c3 6 3 14 1 21M26 10c-6 6-11 8-16 9 7 0 11 3 15 8" fill="none" stroke="#cfe3ff" stroke-width="1.200"/></svg></span>
    <span><svg viewBox="0 0 36 36"><use href="#folder"/></svg></span>
    <span class="dot"><svg viewBox="0 0 36 36"><use href="#outlook"/></svg></span>
    <span class="dot"><svg viewBox="0 0 36 36"><use href="#chrome"/></svg></span>
    <span class="dot"><svg viewBox="0 0 36 36"><use href="#edge"/></svg></span>
    <span class="dot"><svg viewBox="0 0 36 36"><path d="m26 0 10 4v28l-10 4z" fill="#23a9f2"/><path d="M26 0v9L4 27l-4-3z" fill="#0a75bd"/><path d="M26 36v-9L4 9 0 12z" fill="#1286d0"/></svg></span>
    <span class="dot"><svg viewBox="0 0 36 36"><path d="M11 1 34 20 18 28 4 12z" fill="#f6efc8" stroke="#7d6b22"/><path d="M4 12 1 22l16 12 1-6z" fill="#fbf7dc" stroke="#7d6b22"/><path d="m18 28 16-8 1 3-18 11z" fill="#b58e22" stroke="#6d5512"/><path d="m9 5 17 13" stroke="#c79b28" stroke-width="2"/><circle cx="18" cy="16" r="6" fill="#37a06c"/><circle cx="17" cy="15" r="2.500" fill="#e8e040"/></svg></span>
    <span class="active"><svg viewBox="0 0 36 36"><use href="#teams"/></svg><i></i></span>
    <span class="dot"><svg viewBox="0 0 36 36"><path d="M2 4h25v31H2z" fill="#f3f6ee" stroke="#777"/><path d="M3 15h24v18H3z" fill="#72cf35"/><path d="M6 24c2-7 7-8 13-6l5 4-6 1-4 6-6-1z" fill="#2c7a1a" stroke="#123d0a"/><path d="M6 8h17M6 11h14" stroke="#888"/><path d="m33 2 3 1-7 22-3 3v-4z" fill="#e8b13a" stroke="#7a5a18" stroke-width=".8"/></svg></span>
  </div>
  <div class="tray">
    <svg width="20" height="12" fill="none" stroke="#1a1a1a" stroke-width="1.700"><path d="m1 10 9-8.500L19 10"/></svg>
    <svg class="od" width="24" height="16"><path d="M6 6c3-8 13-7 15 0l-6 4z" fill="#0a5fb8"/><path d="M0 11c0-4 4-7 9-5l9 9H5c-3 0-5-2-5-4z" fill="#1279d4"/><path d="m3 15 13-9c5-1 8 2 8 5.500 0 2.500-2 4-4 4H5z" fill="#2aa5ec"/></svg>
    <div class="micb"><svg width="18" height="26"><rect x="4.500" y="1" width="9.500" height="16" rx="4.700" fill="#fff"/><path d="M1.200 12c0 11 16 11 16 0M9.200 20v5" fill="none" stroke="#fff" stroke-width="1.600"/></svg></div>
    <div class="lang">ENG<br>IN</div>
    <svg class="wifi" width="26" height="20" fill="none" stroke="#1a1a1a" stroke-width="1.600"><path d="M1 8.500c7-8.500 17-8.500 24 0M5 12c5-5.500 11-5.500 16 0M8.500 15c3-3 6-3 9 0"/><circle cx="13" cy="17.500" r="1.500" fill="#1a1a1a"/></svg>
    <svg class="vol" width="26" height="20" fill="none" stroke="#1a1a1a" stroke-width="1.600"><path d="M1 7v6h4l6 5V2L5 7zM14 7c1.500 2 1.500 4 0 6M17 4c3.500 4 3.500 8 0 12"/><path d="M20 1.500c5 6 5 11 0 17" stroke="#aab4bc"/></svg>
    <svg class="bat" width="26" height="20"><rect x="2" y="4" width="20" height="14" rx="3" fill="none" stroke="#1a1a1a" stroke-width="1.700"/><path d="M5 15V10l4-3h10v8zM23 8.500h1.500v5H23z" fill="#1a1a1a" stroke="#1a1a1a"/><path d="M5 0 0 7h3l-1 5 6-7H5z" fill="#1a1a1a" stroke="#dce8f2" stroke-width=".8"/></svg>
    <div class="time">10:18<br>11-11-2022</div>
    <b class="badge">42</b>
  </div>
</footer>
</body>
</html>
```
FILE: styles.css
```css
* { box-sizing: border-box; }
body { margin: 0; width: 1920px; height: 1080px; overflow: hidden; display: flex; flex-direction: column; background: #1f1f1f; color: #fff; font-family: "Open Sans", "Noto Sans", sans-serif; letter-spacing: -0.02em; }
svg { display: block; flex: none; }
.defs { position: absolute; }
button { font: inherit; letter-spacing: inherit; color: inherit; padding: 0; }
ul { list-style: none; margin: 0; padding: 0; }

/* meeting title bar */
.titlebar { height: 59px; flex: none; background: #0a0a0a; border-bottom: 1px solid #000; display: flex; align-items: center; padding-left: 26px; }
.titlebar h1 { flex: 1; margin: 0 0 0 119px; text-align: center; font-size: 21px; font-weight: 400; letter-spacing: -0.028em; padding-top: 2px; }
.titlebar .winctl { margin-right: 20px; }

/* meeting toolbar */
.toolbar { height: 91px; flex: none; background: #242424; border-bottom: 1px solid #1a1a1a; display: flex; align-items: flex-start; padding-left: 12px; }
.tool { width: 84px; height: 90px; padding-top: 16px; display: flex; flex-direction: column; align-items: center; color: #d1d1d1; font-size: 16px; letter-spacing: -0.03em; }
.tool svg { height: 34px; }
.tool span { line-height: 22px; margin-top: 6px; white-space: nowrap; }
.tool.on { color: #fff; }
.sep { width: 1px; height: 48px; margin: 21px 13px 0 12px; background: #555; }
.shield { margin: 32px 0 0 12px; }
.rec { margin: 32px 0 0 23px; }
.clock { margin: 32px 0 0 23px; width: 49px; font-size: 20px; line-height: 28px; letter-spacing: -0.03em; }
.request { margin: 21px 9px 0 329px; width: 213px; height: 48px; border: 1px solid #606060; border-radius: 5px; background: #292929; font-size: 21px; font-weight: 600; letter-spacing: -0.042em; box-shadow: 0 2px 4px #0006; padding-top: 2px; }
.leave { margin: 21px 0 0 12px; width: 156px; height: 48px; border: 0; border-radius: 5px; background: #c4314b; font-size: 20px; font-weight: 600; letter-spacing: -0.04em; display: flex; align-items: center; padding: 3px 0 0 28px; gap: 13px; box-shadow: 0 2px 4px #0006; }
.leave svg { margin-top: -3px; }

/* stage */
.stage { height: 858px; flex: none; display: flex; }
.share { position: relative; margin-left: 8px; width: 1537px; height: 851px; padding: 6px 0 0 88px; background: #1a1a1a; }
.visio { width: 1362px; height: 845px; background: #0a0a0a; display: flex; flex-direction: column; font-size: 9.500px; color: #ececec; overflow: hidden; letter-spacing: -0.01em; }
.caption { position: absolute; left: 12px; top: 803px; width: 498px; height: 36px; border-radius: 5px; background: rgba(14, 14, 14, .6); font-size: 19px; line-height: 34px; padding-left: 8px; letter-spacing: -0.048em; white-space: nowrap; color: #fff; }

.vtitle { height: 36px; flex: none; display: flex; align-items: center; white-space: nowrap; }
.marker { width: 7px; height: 24px; align-self: flex-start; background: #2f7af2; }
.vlogo { margin-left: 6px; }
.save { margin-left: 12px; }
.doc { margin-left: 8px; width: 201px; letter-spacing: -0.02em; }
.user { margin-left: auto; letter-spacing: -0.005em; }
.ava { width: 20px; height: 20px; border-radius: 50%; background: #c239b3; font-weight: 400; font-size: 8.500px; line-height: 20px; text-align: center; margin: -1px 24px 0 9px; }
.vctl { margin-right: 12px; }

.menus { height: 26px; flex: none; display: flex; align-items: center; padding: 3px 0 0 18px; white-space: nowrap; }
.menus span { flex: none; line-height: 20px; height: 20px; }
.m1 { width: 37px; } .m2 { width: 30px; margin-right: 16px; } .m3 { width: 43px; } .m4 { width: 41px; } .m5 { width: 48px; } .m6 { width: 38px; } .m7 { width: 54px; } .m8 { width: 48px; } .m9 { width: 39px; } .m10 { width: 50px; }
.menus .cur { font-weight: 700; color: #fff; border-bottom: 2px solid #6f98e6; height: 19px; letter-spacing: -0.03em; }
.menus .tell { margin-left: 10px; flex: 1; font-size: 10px; letter-spacing: 0.010em; }
.menus button { display: flex; align-items: center; gap: 4px; height: 20px; border-radius: 3px; margin-top: -2px; }
.comments { width: 78px; background: #1b1b1b; border: 1px solid #666; padding-left: 5px; }
.menus .shareb { width: 55px; margin-left: 6px; background: #4a86f0; border: 0; padding-left: 6px; color: #0a1836; }
.fb { margin-left: 11px; }
.x2 { margin: 0 14px 0 25px; }

/* ribbon */
.ribbon { width: 1349px; height: 80px; flex: none; margin-left: 7px; background: #262626; border-radius: 6px; display: flex; white-space: nowrap; letter-spacing: -0.02em; }
.grp { position: relative; height: 80px; padding-top: 3px; flex: none; }
.grp::after { content: ""; position: absolute; right: 0; top: 4px; width: 1px; height: 72px; background: #555; }
.grp > .body { height: 63px; display: flex; }
.grp em { display: block; height: 14px; line-height: 14px; font-style: normal; text-align: center; font-size: 9.200px; }
.dl { position: absolute; right: 2px; bottom: 3px; }
.g-undo { width: 49px; } .g-clip { width: 137px; } .g-font { width: 186px; } .g-para { width: 140px; } .g-tools { width: 125px; } .g-style { width: 369px; } .g-arr { width: 188px; } .g-edit { width: 116px; }
.big { display: flex; flex-direction: column; align-items: center; padding-top: 4px; line-height: 12px; width: 46px; text-align: center; }
.g-clip .big { width: 47px; }
.g-clip .rows { margin-left: -3px; }
.big > span { margin: 2px 0; }
.big span svg { display: inline-block; }
.rows > div { display: flex; align-items: center; height: 21px; }
.rows > div > svg:first-child { margin-right: 3px; }
.rows > div > svg:last-child { margin-left: 1px; }
.rows > div > svg.far { margin-left: 8px; }
.two { flex-direction: column; padding: 3px 0 0 7px; }
.line { display: flex; align-items: center; height: 26px; }
.combo { display: flex; justify-content: space-between; align-items: center; height: 19px; border: 1px solid #6a6a6a; border-radius: 3px; padding: 0 0 0 2px; }
.c1 { width: 87px; margin-right: 2px; } .c2 { width: 42px; }
.aa { font-size: 12.500px; margin-left: 6px; color: #ccc; width: 17px; display: flex; }
.aa.sm { font-size: 11px; }
.aa sup { color: #4aa0e0; font-size: 9px; line-height: 10px; }
.fmt { font-size: 10.500px; color: #ccc; }
.fmt b, .fmt i:not(.vs), .fmt u, .fmt s { width: 21px; text-align: center; }
.fmt i:not(.vs) { font-family: "Liberation Serif", serif; }
.fmt span { margin-left: 3px; }
.vs { width: 1px; height: 18px; background: #555; margin: 0 4px 0 7px; }
.fmt .acol { border-bottom: 3px solid #4472c4; line-height: 11px; width: 13px; margin: 0 5px 0 0; text-align: center; }
.g-para em { padding-right: 14px; }
.g-tools .body { padding-left: 7px; }
.g-tools .rows { width: 81px; }
.rows > .boxed { width: 77px; border: 1px solid #888; border-radius: 3px; height: 20px; background: #333; margin-bottom: 1px; }
.g-tools .rows > div:not(.boxed) { padding-left: 1px; }
.gallery { margin: 7px 8px 0 8px; width: 286px; height: 48px; border: 1px solid #555; border-radius: 3px; display: flex; align-items: center; }
.t { width: 39px; height: 39px; background: #fff; margin-right: 6.400px; display: flex; align-items: center; justify-content: center; flex: none; }
.t:first-child { margin-left: 3px; }
.t.sel { outline: 2px solid #999; outline-offset: 1px; }
.t b { width: 28px; height: 28px; border-radius: 4px; font-weight: 400; font-size: 8px; line-height: 27px; text-align: center; color: #fff; }
.t + svg { margin-left: -3px; }
.f1 { background: #4472c4; } .f3 { background: #3a60ab; } .t .f2 { background: #f3f6fc; border: 1px solid #4472c4; color: #35599f; } .t .f5 { border: 1px solid #eee; color: #4b74bf; } .t .f6 { border: 1px solid #eee; color: #8aa8dd; }
.g-style .rows > div > svg:first-child { margin-right: 4px; }
.g-style em { padding-right: 13px; }
.g-arr .big { width: 38px; }
.g-arr .big:first-child { margin-left: 5px; }
.g-arr .rows { margin-left: 4px; }
.g-edit .big { margin-left: 3px; }
.g-edit .rows { margin-left: 3px; }
.collapse { margin: 66px 0 0 22px; }

/* workspace */
.work { height: 649px; flex: none; display: flex; }
.shapes { width: 207px; padding: 0 4px 0 5px; color: #e2e2e2; }
.shapes h2 { height: 45px; margin: 0; padding: 4px 3px 0 2px; font-size: 17px; line-height: 30px; font-weight: 400; color: #7399e0; display: flex; justify-content: space-between; }
.shapes h2 svg { margin-top: 8px; }
.search { height: 18px; border: 1px solid #8a8a8a; border-radius: 3px; background: #262626; display: flex; align-items: center; gap: 3px; padding: 0 2px 0 3px; }
.search span { flex: 1; }
.cats { margin-top: 19px; padding-bottom: 5px; border-bottom: 1px solid #555; }
.cats li { height: 19.500px; line-height: 20px; padding-left: 3px; display: flex; align-items: center; gap: 11px; font-size: 9.300px; letter-spacing: -0.012em; }
.cats .cur { font-weight: 700; background: #1d1d1d; color: #fff; border-radius: 3px; letter-spacing: -0.02em; }
.pal { display: grid; grid-template-columns: 92px 1fr; grid-auto-rows: 30.200px; padding-left: 3px; font-size: 9.300px; line-height: 12px; }
.cats + .pal { padding-top: 7px; }
.pal > div { display: flex; align-items: center; gap: 4px; white-space: nowrap; }
.pal svg { width: 22px; height: 22px; fill: #4a73c6; stroke: #a9b9dc; stroke-width: .9; margin-top: -1px; }
.shapes hr { width: 147px; margin: 2px 0 4px 20px; border: 0; border-top: 1px solid #444; }

.editor { width: 1155px; display: flex; flex-direction: column; }
.hruler { height: 16px; display: flex; width: 1141px; margin-left: 1px; padding-top: 2px; font-size: 7.500px; color: #bbb; }
.cross { width: 15px; height: 14px; background: linear-gradient(#777, #777) 7px 0 / 1px 100% no-repeat, linear-gradient(#777, #777) 0 7px / 100% 1px no-repeat; }
.ticks { flex: 1; overflow: hidden; display: flex; border-bottom: 1px solid #888; }
.ticks span { flex: none; width: 30.800px; height: 13px; border-left: 1px solid #888; line-height: 11px; padding-left: 1px; background: linear-gradient(#888, #888) 15px 4px / 1px 9px no-repeat; letter-spacing: -0.03em; }
.ticks span:first-child { margin-left: -6px; }
.mid { height: 610px; display: flex; }
.vruler { width: 16px; border-right: 1px solid #888; overflow: hidden; display: flex; flex-direction: column; font-size: 7.500px; color: #bbb; padding-left: 1px; }
.vruler span { flex: none; height: 30.800px; border-top: 1px solid #888; background: linear-gradient(#888, #888) 5px 15px / 10px 1px no-repeat; }
.vruler span:first-child { margin-top: -9px; }
.vruler b { display: block; font-weight: 400; writing-mode: vertical-rl; transform: rotate(180deg); line-height: 10px; width: 10px; margin-top: 1px; letter-spacing: -0.03em; }
.canvas { background: #0b0b0b; letter-spacing: 0; }
.canvas text { text-anchor: middle; }
.dt { font: 400 24px Lato, sans-serif; fill: #4472b8; }
.cl text { font: 400 8.500px Lato, sans-serif; fill: #45639f; }
.bl text { font: 600 9px "Open Sans", sans-serif; fill: #e3eafa; }
.vscroll { width: 14px; background: #101010; display: flex; flex-direction: column; align-items: center; justify-content: space-between; padding-bottom: 3px; }
.vscroll .up { margin-top: -11px; }
.vscroll i { width: 7px; height: 238px; border-radius: 4px; background: #8c8c8c; margin-bottom: 29px; }
.tabs { height: 23px; background: #262626; width: 1141px; margin-left: 1px; display: flex; align-items: center; white-space: nowrap; }
.tabs > i { width: 1px; height: 12px; background: #aaa; flex: none; }
.p1 { width: 105px; padding-left: 12px; letter-spacing: -0.025em; } .p2 { width: 123px; padding-left: 10px; letter-spacing: -0.02em; }
.p3 { width: 65px; margin: 0 4px; height: 20px; align-self: flex-start; background: #000; color: #fff; font-weight: 700; font-size: 9.300px; line-height: 18px; text-align: center; border-bottom: 2px solid #2c5aa8; letter-spacing: -0.03em; }
.p4 { width: 38px; padding-left: 8px; display: flex; align-items: center; gap: 4px; }
.plus { margin-left: 6px; }
.grip { margin-left: 216px; }
.hs { margin-left: 6px; width: 555px; height: 14px; background: #111; border-radius: 7px; display: flex; align-items: center; justify-content: space-between; padding: 0 3px 0 4px; }
.hs i { width: 229px; height: 7px; border-radius: 4px; background: #9a9a9a; margin-left: -7px; }

.status { height: 19px; flex: none; border-top: 1px solid #333; background: #111; display: flex; align-items: center; padding: 0 7px; white-space: nowrap; color: #ddd; font-size: 9px; }
.q1 { width: 60px; } .q2 { width: 73px; } .q3 { width: 76px; } .q4 { width: 52px; } .q5 { width: 113px; }
.qr { margin-left: auto; }
.pct { margin-left: 7px; letter-spacing: -0.05em; }
.vtask { height: 35px; flex: none; border-top: 1px solid #444; display: flex; align-items: center; background: linear-gradient(90deg, #231f1f, #2c1c19 20%, #391a11 35%, #381a12 55%, #2c201e 80%, #251f1f); font-size: 9px; line-height: 13px; white-space: nowrap; }
.cloud { margin-left: 15px; }
.wt { margin-left: 4px; width: 66px; }
.vicons { margin-left: 368px; display: flex; }
.vicons > svg, .vicons > span { width: 19px; height: 19px; margin-right: 16.700px; position: relative; }
.vicons span svg { width: 19px; height: 19px; }
.vicons .dot::after { content: ""; position: absolute; left: 8px; top: 22px; width: 4px; height: 2px; border-radius: 1px; background: #999; }
.vicons .act { background: #ffffff12; box-shadow: 0 0 0 6px #ffffff12; border-radius: 1px; }
.vicons .act::after { left: 4px; width: 12px; background: #4cb5f5; }
.tm b { position: absolute; left: 10px; top: -4px; width: 11px; height: 11px; border-radius: 50%; background: #c4314b; font-size: 8px; line-height: 11px; font-weight: 400; text-align: center; }
.vt { margin-left: auto; text-align: right; padding-right: 14px; letter-spacing: -0.03em; }

/* participants */
.people { position: relative; width: 375px; padding: 88px 7px 0 6px; }
.glow { position: absolute; left: 27px; top: 310px; width: 320px; height: 320px; background: radial-gradient(closest-side, #343343, #1f1f1f00); }
.pgrid { position: relative; display: grid; grid-template-columns: 165px 165px; grid-auto-rows: 165px; padding-left: 16px; }
.p { display: flex; flex-direction: column; align-items: center; }
.p b { width: 105px; height: 105px; border-radius: 50%; font-size: 42px; font-weight: 600; line-height: 104px; text-align: center; letter-spacing: 0; box-shadow: 0 2px 6px #0005; }
.p div { display: flex; justify-content: space-between; align-items: center; width: 138px; margin: 10px 2px 0 0; }
.p span { font-size: 18px; line-height: 25px; letter-spacing: -0.025em; white-space: nowrap; }
.p div svg { margin: -2px 0 0; }
.ap { background: #f9ebd0; color: #835b13; } .gr { background: #fdefcb; color: #836108; } .vc { background: #dbe2d6; color: #33431f; } .pm { background: #d8d6ea; color: #29224f; }
.solo { position: relative; }
.p .ring { box-shadow: 0 0 0 3px #1f1f26, 0 0 0 8px #7f85f5; line-height: 103px; }
.solo span { margin: 10px 5px 0 0; }
.self { position: absolute; left: 6px; top: 651px; width: 362px; height: 200px; background: #323232; display: flex; align-items: center; justify-content: center; }
.self b { width: 84px; height: 84px; border-radius: 50%; background: #fbded9; color: #8a3a2b; font-size: 34px; font-weight: 600; line-height: 84px; text-align: center; }

/* desktop taskbar */
.taskbar { height: 72px; flex: none; border-top: 2px solid #afbcc1; display: flex; align-items: center; color: #1a1a1a; background: linear-gradient(90deg, #e6f0fa, #d3e2ef 30%, #cfdeee 55%, #d2e3ef 80%, #e2ecfa); }
.start { margin-left: 31px; }
.find { margin-left: 23px; width: 146px; height: 45px; border-radius: 23px; background: #f6fafd; box-shadow: 0 1px 2px #0002; display: flex; align-items: center; padding: 0 0 2px 31px; gap: 8px; font-size: 17.500px; letter-spacing: -0.025em; }
.apps { display: flex; margin-left: 21px; gap: 30px; }
.apps span { width: 36px; height: 36px; position: relative; }
.apps svg { width: 36px; height: 36px; position: relative; }
.apps .dot::after { content: ""; position: absolute; left: 14px; top: 42px; width: 8px; height: 5px; border-radius: 3px; background: #7b858e; }
.wx b { position: absolute; left: 13px; top: -9px; width: 36px; height: 25px; border-radius: 12px; background: #f2f6fa; font-weight: 400; font-size: 17px; line-height: 24px; text-align: center; letter-spacing: -0.04em; }
.active::before { content: ""; position: absolute; left: -10px; top: -12px; width: 51px; height: 58px; border-radius: 6px; background: #edf3fa; box-shadow: 0 0 0 1px #c6d3de, 4px 0 0 0 #dbe6f2, 5px 0 0 0 #c3d0dc; }
.active::after { content: ""; position: absolute; left: 6px; top: 42px; width: 24px; height: 5px; border-radius: 3px; background: #0a74d0; }
.active i { position: absolute; left: 26px; top: -2px; width: 17px; height: 17px; border-radius: 50%; background: #c50f2f; border: 1px solid #fff; }
.tray { margin-left: auto; display: flex; align-items: center; padding: 0 28px 2px 0; white-space: nowrap; }
.od { margin-left: 13px; }
.micb { margin-left: 6px; width: 48px; height: 60px; border-radius: 6px; background: #0463c0; border-bottom: 2px solid #04478c; display: flex; align-items: center; justify-content: center; }
.lang { width: 66px; text-align: center; font-size: 17px; line-height: 23px; letter-spacing: -0.03em; }
.wifi { margin-left: 11px; } .vol { margin-left: 10px; } .bat { margin-left: 10px; }
.time { width: 105px; text-align: right; font-size: 17px; line-height: 24px; letter-spacing: -0.03em; }
.badge { margin-left: 8px; width: 29px; height: 24px; border-radius: 12px; background: #0463c0; color: #fff; font-weight: 400; font-size: 15px; line-height: 23px; text-align: center; }
```
